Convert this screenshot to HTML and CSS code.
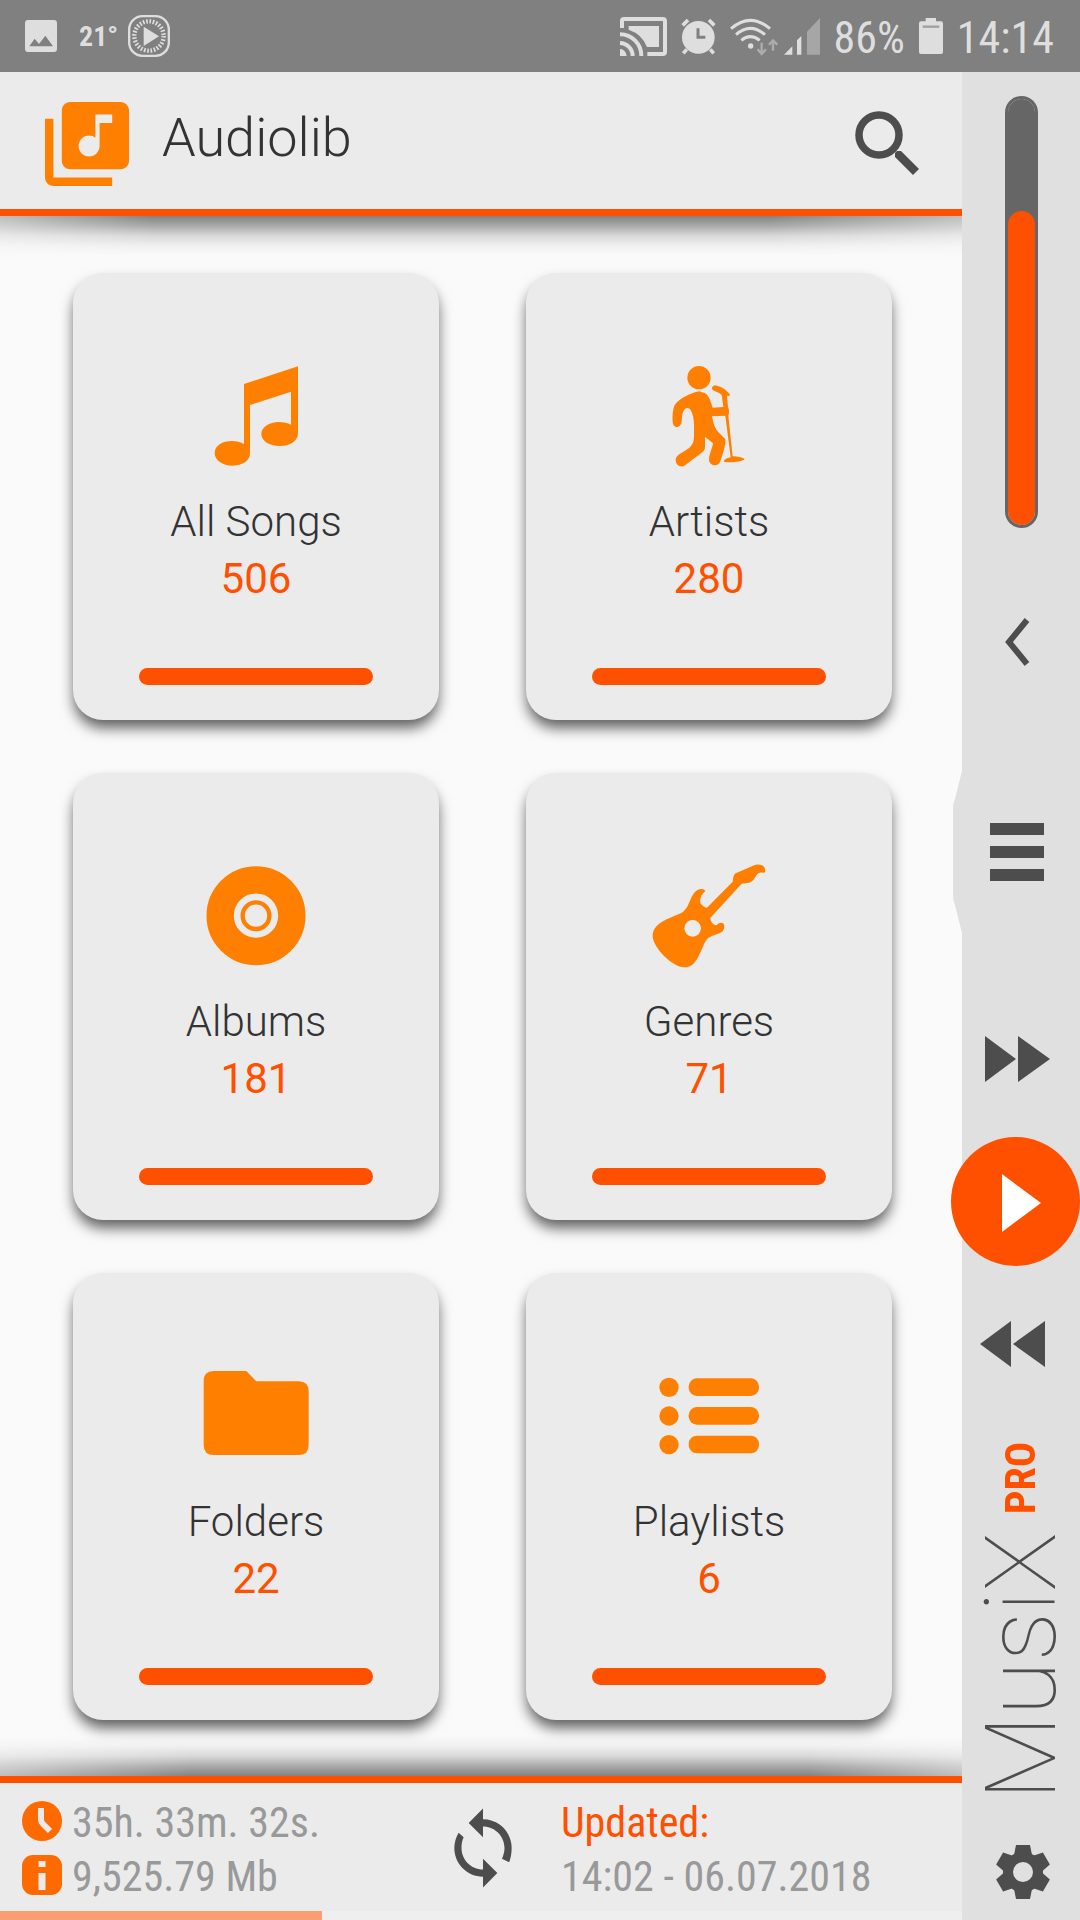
FILE: index.html
```html
<!DOCTYPE html>
<html lang="en">
<head>
<meta charset="utf-8">
<meta name="viewport" content="width=device-width, initial-scale=1">
<title>Audiolib</title>
<link rel="stylesheet" href="styles.css">
</head>
<body>
<div class="status">
  <div class="status-side">
    <svg class="st-picture" viewBox="75 63 96 96" aria-hidden="true"><path fill="currentColor" fill-rule="evenodd" d="M84 63h78q9 0 9 9v78q0 9-9 9H84q-9 0-9-9V72q0-9 9-9zM88 142h71l-23-32-19 25-13-16z"/></svg>
    <span class="temp">21°</span>
    <svg class="st-player" viewBox="384 47 126 126" aria-hidden="true"><rect x="387.500" y="50.500" width="119" height="119" rx="40" fill="none" stroke="currentColor" stroke-width="7"/><circle cx="447" cy="110" r="44" fill="none" stroke="currentColor" stroke-width="13" stroke-dasharray="5 4.87"/><path fill="currentColor" d="M431 82v58l46-29z"/></svg>
  </div>
  <div class="status-side">
    <svg class="st-cast" viewBox="60 54 141 117" aria-hidden="true"><g fill="none" stroke="currentColor" stroke-width="12"><path d="M66 87V66q0-6 6-6h116q7 0 7 7v91q0 7-7 7h-46"/><path d="M60 106a64 64 0 0 1 64 65M60 132a39 39 0 0 1 38 39"/></g><path fill="currentColor" d="M86 81h91v63h-36q-14-38-55-52zM60 150a21 21 0 0 1 20 21H60z"/></svg>
    <svg class="st-alarm" viewBox="245 57 105 108" aria-hidden="true"><circle cx="297" cy="115" r="49" fill="currentColor"/><path d="M250 79l16-16M345 79l-16-16M262 151l-10 12M333 151l10 12" stroke="currentColor" stroke-width="11"/><path d="M296 88v27h22" fill="none" stroke="#808080" stroke-width="9"/></svg>
    <svg class="st-wifi" viewBox="393 53 120 102" aria-hidden="true"><g fill="none" stroke="currentColor" stroke-width="9"><path d="M396 82q58-50 117 0M411 100q43-38 87 0M427 117q27-22 55 0"/></g><circle cx="455" cy="134" r="8" fill="currentColor"/><path d="M488 124v30M476 144l12 14 13-14M522 148v-29M510 130l12-13 13 13" fill="none" stroke="#adadad" stroke-width="7"/></svg>
    <svg class="st-signal" viewBox="555 52 108 111" aria-hidden="true"><path fill="#a6a6a6" d="M624 93l39-41v110h-39z"/><path fill="currentColor" d="M555 162l25-25v25zM594 119l13-13v56h-13z"/></svg>
    <span class="status-text">86%</span>
    <svg class="st-battery" viewBox="957 57 72 108" aria-hidden="true"><path fill="currentColor" d="M977 57h31v10h15q6 0 6 6v86q0 6-6 6h-60q-6 0-6-6V73q0-6 6-6h14z"/><path stroke="#a0a0a0" stroke-width="7" d="M968 83h50"/></svg>
    <time class="status-text">14:14</time>
  </div>
</div>

<div class="app">
  <div class="library">
    <header class="topbar">
      <svg class="logo" viewBox="2 2 20 20" aria-hidden="true"><path fill="currentColor" d="M20 2H8c-1.1 0-2 .9-2 2v12c0 1.100.9 2 2 2h12c1.100 0 2-.9 2-2V4c0-1.100-.9-2-2-2zm-2 5h-3v5.500c0 1.380-1.120 2.500-2.500 2.500S10 13.880 10 12.500s1.120-2.500 2.500-2.500c.57 0 1.080.19 1.500.51V5h4v2zM4 6H2v14c0 1.100.9 2 2 2h14v-2H4V6z"/></svg>
      <h1 class="title">Audiolib</h1>
      <button class="search" type="button" aria-label="Search"><svg viewBox="855 111 64 64" aria-hidden="true"><circle cx="879" cy="135" r="20" fill="none" stroke="currentColor" stroke-width="7.500"/><path fill="currentColor" d="M897 151h4l18 18-6 6-18-18v-4z"/></svg></button>
    </header>

    <main class="grid">
      <button class="card" type="button">
        <svg class="card-icon" viewBox="483 333 330 330" aria-hidden="true"><path fill="currentColor" d="M612 402l162-53v200c0 25-24 39-54 39-32 0-56-15-56-36s24-36 52-36c14 0 27 3 37 8v-99l-123 40v145c0 22-22 37-52 37-31 0-54-16-54-38s23-36 52-36c14 0 26 3 36 9z"/></svg>
        <span class="card-name">All Songs</span><span class="card-count">506</span><span class="card-bar"></span>
      </button>
      <button class="card" type="button">
        <svg class="card-icon" viewBox="462 333 330 330" aria-hidden="true"><circle cx="597" cy="383" r="35" fill="currentColor"/><path fill="currentColor" d="M600 426c22 0 28 14 38 47l32-2-5-37c-8-6-18-9-26-13-6-6-2-14 6-15 17 2 36 15 44 27 2 5-2 6-8 4l3 34c4 6 4 20 1 26l13 122c14 0 30 3 36 9-10 9-46 11-62 7 0-7 10-11 20-13l-16-125-40 2c4 22 10 38 18 46 8 9 16 15 22 22 2 18-8 46-15 67-5 18-34 14-34-5 0-16 10-34 12-49l-24-20v31c0 9-4 12-10 17l-49 37c-14 11-29 0-29-15 0-8 4-13 13-19 30-17 42-24 42-53v-30c0-20-3-36-10-48-3-5-6-7-11-6-15 5-14 22-16 42-4 21-26 20-27 0-1-16 0-38 6-51 14-19 54-41 80-41z"/></svg>
        <span class="card-name">Artists</span><span class="card-count">280</span><span class="card-bar"></span>
      </button>
      <button class="card" type="button">
        <svg class="card-icon" viewBox="483 183 330 330" aria-hidden="true"><circle cx="648" cy="347" r="107.500" fill="none" stroke="currentColor" stroke-width="82"/><circle cx="648" cy="347" r="40" fill="none" stroke="currentColor" stroke-width="13"/></svg>
        <span class="card-name">Albums</span><span class="card-count">181</span><span class="card-bar"></span>
      </button>
      <button class="card" type="button">
        <svg class="card-icon" viewBox="462 183 330 330" aria-hidden="true"><path fill="currentColor" fill-rule="evenodd" d="M458 408c0-39 48-52 86-69 24-14 24-44 40-62 8-10 25-14 32-4-14 12-18 25-14 38 5 6 11 9 18 13l78-79c2-10 1-19 9-25l52-23c14-6 30-5 36 9 2 8 0 14-7 12-18-4-20 14-30 24-8 8-22 7-33 9l-94 103c0 10 10 24 20 21 6-8 20-10 22 2 0 10-3 16-9 20-16 9-34 10-44 22-18 22-24 83-67 83-35 0-95-60-95-94zM553 385a25 25 0 1 0 50 0 25 25 0 1 0-50 0z"/></svg>
        <span class="card-name">Genres</span><span class="card-count">71</span><span class="card-bar"></span>
      </button>
      <button class="card" type="button">
        <svg class="card-icon" viewBox="483 183 330 330" aria-hidden="true"><path fill="currentColor" d="M521 213h98l30 31h127q30 0 30 30v161q0 30-30 30H521q-30 0-30-30V243q0-30 30-30z"/></svg>
        <span class="card-name">Folders</span><span class="card-count">22</span><span class="card-bar"></span>
      </button>
      <button class="card" type="button">
        <svg class="card-icon" viewBox="462 183 330 330" aria-hidden="true"><g fill="currentColor"><circle cx="507" cy="262" r="29"/><circle cx="507" cy="348" r="29"/><circle cx="507" cy="434" r="29"/><rect x="566" y="235" width="211" height="53" rx="25"/><rect x="566" y="321" width="211" height="53" rx="25"/><rect x="566" y="407" width="211" height="53" rx="25"/></g></svg>
        <span class="card-name">Playlists</span><span class="card-count">6</span><span class="card-bar"></span>
      </button>
    </main>

    <footer class="summary">
      <div class="summary-row">
        <div class="totals">
          <div class="total"><svg class="total-icon" viewBox="22 1802 40 40" aria-hidden="true"><circle cx="42" cy="1822" r="20" fill="currentColor"/><path d="M41 1809v12q0 2 2 4l7 7" fill="none" stroke="#ebebeb" stroke-width="6"/></svg>35h. 33m. 32s.</div>
          <div class="total"><svg class="total-icon" viewBox="22 1854 40 40" aria-hidden="true"><rect x="22" y="1854" width="40" height="40" rx="11" fill="currentColor"/><path d="M42 1860v6M42 1872v17" stroke="#ebebeb" stroke-width="7"/></svg>9,525.79 Mb</div>
        </div>
        <button class="refresh" type="button" aria-label="Rescan library"><svg viewBox="0 0 24 24" aria-hidden="true"><path fill="currentColor" d="M12 4V1L8 5l4 4V6c3.310 0 6 2.690 6 6 0 1.010-.25 1.970-.7 3l2 1C19.700 15 20 13.570 20 12c0-4.420-3.580-8-8-8zm0 14c-3.310 0-6-2.690-6-6 0-1.010.1-1.970.6-3L5.200 7.740C4.460 8.970 4 10.430 4 12c0 4.420 3.580 8 8 8v3l4-4-4-4v3z"/></svg></button>
        <div class="updated"><div class="updated-label">Updated:</div><time>14:02 - 06.07.2018</time></div>
      </div>
      <div class="progress"><div class="progress-fill" style="width:33.5%"></div></div>
    </footer>
  </div>

  <aside class="rail">
    <div class="rail-group">
      <input class="volume" type="range" min="0" max="100" value="72" aria-label="Volume" style="--level:70.5%">
      <button class="rail-btn back" type="button" aria-label="Back"><svg viewBox="962 617 118 50" aria-hidden="true"><path d="M1027 620l-18 22 18 22" fill="none" stroke="currentColor" stroke-width="6"/></svg></button>
      <button class="rail-btn menu" type="button" aria-label="Menu"><svg viewBox="962 767 118 170" aria-hidden="true"><path fill="#e0e0e0" d="M963 767l-8 32q-2 4-2 10v86q0 6 2 10l8 32z"/><path fill="currentColor" d="M990 823h54v12h-54zM990 846h54v12h-54zM990 869h54v12h-54z"/></svg></button>
    </div>
    <div class="rail-group">
      <button class="rail-btn skip" type="button" aria-label="Next"><svg viewBox="962 1030 118 64" aria-hidden="true"><path fill="currentColor" d="M985 1039v46l31-23zM1018 1039v46l32-23z"/></svg></button>
      <button class="play" type="button" aria-label="Play"><svg viewBox="951 1138 129 130" aria-hidden="true"><path fill="currentColor" d="M1002 1175v58l39-29z"/></svg></button>
      <button class="rail-btn skip" type="button" aria-label="Previous"><svg viewBox="962 1315 118 64" aria-hidden="true"><path fill="currentColor" d="M1011 1324v46l-31-23zM1045 1324v46l-32-23z"/></svg></button>
    </div>
    <div class="rail-group">
      <div class="brand"><span class="brand-name">MusiX</span><span class="brand-pro">PRO</span></div>
      <button class="rail-btn gear" type="button" aria-label="Settings"><svg viewBox="-61 -28 118 56" aria-hidden="true"><circle r="15" fill="none" stroke="currentColor" stroke-width="10"/><g fill="currentColor"><path id="tooth" d="M-7-27H7l2 10H-9z"/><use href="#tooth" transform="rotate(60)"/><use href="#tooth" transform="rotate(120)"/><use href="#tooth" transform="rotate(180)"/><use href="#tooth" transform="rotate(240)"/><use href="#tooth" transform="rotate(300)"/></g></svg></button>
    </div>
  </aside>
</div>
</body>
</html>
```
FILE: styles.css
```css
:root {
  --accent: #ff5000;
  --amber: #ff8000;
  --ink: #4d4d4d;
  --panel: #ebebeb;
  --rail: #e0e0e0;
  --condensed: "Roboto Condensed", "Liberation Sans Narrow", Roboto, sans-serif;
}
* { box-sizing: border-box; }
body {
  margin: 0;
  min-height: 100vh;
  display: flex;
  flex-direction: column;
  background: #fafafa;
  color: #333;
  font-family: Roboto, sans-serif;
}
button {
  border: 0;
  padding: 0;
  background: none;
  color: inherit;
  font: inherit;
  cursor: pointer;
}
svg { display: block; overflow: visible; }

/* Status bar */
.status {
  height: 72px;
  padding: 0 26px 0 25px;
  display: flex;
  justify-content: space-between;
  background: #808080;
  color: #dedede;
}
.status-side { display: flex; align-items: center; gap: 14px; }
.status-text { padding-top: 4px; font-family: var(--condensed); font-size: 44px; line-height: 72px; }
.temp { width: 43px; padding-left: 8px; font-family: var(--condensed); font-size: 28px; font-weight: 700; }
.st-picture { width: 32px; }
.st-player { width: 42px; }
.st-cast { width: 47px; }
.st-alarm { width: 35px; }
.st-wifi { width: 40px; }
.st-signal { width: 36px; }
.st-battery { width: 24px; }

.app { flex: 1; display: flex; }
.library { flex: 1; min-width: 0; display: flex; flex-direction: column; }

/* Header */
.topbar {
  height: 144px;
  padding: 0 43px 0 45px;
  display: flex;
  align-items: center;
  border-bottom: 7px solid var(--accent);
  background: var(--panel);
}
.logo { width: 84px; margin-top: 6px; color: var(--amber); }
.title { flex: 1; margin: 0 0 6px 33px; font-size: 54px; font-weight: 300; line-height: 64px; }
.search { width: 64px; margin-top: 4px; color: var(--ink); }

/* Category cards */
.grid {
  position: relative;
  flex: 1;
  padding: 57px 70px 56px 73px;
  display: grid;
  grid-template-columns: 1fr 1fr;
  align-content: space-between;
  gap: 53px 87px;
}
.grid::before, .grid::after {
  content: "";
  position: absolute;
  left: 0;
  right: 0;
  height: 40px;
  background: linear-gradient(rgba(0,0,0,.48), rgba(0,0,0,.34) 22%, rgba(0,0,0,.13) 50%, rgba(0,0,0,.04) 75%, transparent);
  mask-image: linear-gradient(to right, rgba(0,0,0,.5), #000 16%, #000 80%, rgba(0,0,0,.5));
  pointer-events: none;
}
.grid::before { top: 0; }
.grid::after { bottom: 0; transform: rotate(180deg); }
.card {
  padding: 88px 0 35px;
  display: flex;
  flex-direction: column;
  align-items: center;
  border-radius: 30px;
  background: var(--panel);
  box-shadow: 0 9px 14px -1px rgba(0,0,0,.62);
}
.card-icon { width: 110px; height: 110px; margin-bottom: 22px; color: var(--amber); }
.card-name, .card-count { font-size: 42px; line-height: 57px; }
.card-name { font-weight: 300; }
.card-count { color: var(--accent); }
.card-bar { width: 64%; height: 17px; margin-top: 61px; border-radius: 9px; background: var(--accent); }

/* Library summary */
.summary { border-top: 7px solid var(--accent); background: var(--panel); }
.summary-row {
  height: 128px;
  padding: 5px 22px 0;
  display: flex;
  align-items: center;
  font-family: var(--condensed);
  font-size: 42px;
  line-height: 54px;
  color: #999;
}
.totals { width: 418px; }
.total { display: flex; align-items: center; gap: 10px; white-space: nowrap; }
.total-icon { width: 40px; margin-bottom: 4px; color: #ff6a00; }
.refresh { width: 86px; margin-bottom: 4px; color: var(--ink); }
.updated { margin-left: 35px; white-space: nowrap; }
.updated-label { color: var(--accent); }
.progress { height: 9px; background: #efefef; }
.progress-fill { height: 9px; background: #fc9e74; }

/* Player rail */
.rail {
  position: relative;
  width: 118px;
  padding: 24px 0 10px;
  display: flex;
  flex-direction: column;
  justify-content: space-between;
  background: var(--rail);
  color: var(--ink);
}
.rail-group { display: flex; flex-direction: column; align-items: center; }
.volume {
  appearance: none;
  writing-mode: vertical-lr;
  direction: rtl;
  width: 33px;
  height: 432px;
  margin: 0;
  border: 3px solid #666;
  border-radius: 17px;
  background: linear-gradient(to top, var(--accent) var(--level), #666 0) padding-box;
}
.volume::-webkit-slider-thumb {
  appearance: none;
  width: 27px;
  height: 27px;
  border-radius: 50%;
  background: var(--accent);
}
.rail-btn { width: 100%; display: flex; align-items: center; }
.rail-btn svg { width: 100%; }
.back { height: 228px; }
.menu { height: 192px; margin-bottom: 14px; }
.skip { height: 156px; }
.play { width: 129px; height: 129px; align-self: flex-end; border-radius: 50%; background: var(--accent); color: #fff; }
.brand {
  display: flex;
  align-items: center;
  gap: 18px;
  writing-mode: vertical-rl;
  transform: rotate(180deg);
}
.brand-name { font-size: 99px; font-weight: 100; line-height: 118px; }
.brand-pro { font-family: var(--condensed); font-size: 42px; font-weight: 700; line-height: 52px; color: var(--accent); }
.gear { height: 76px; margin-top: 34px; }
```
